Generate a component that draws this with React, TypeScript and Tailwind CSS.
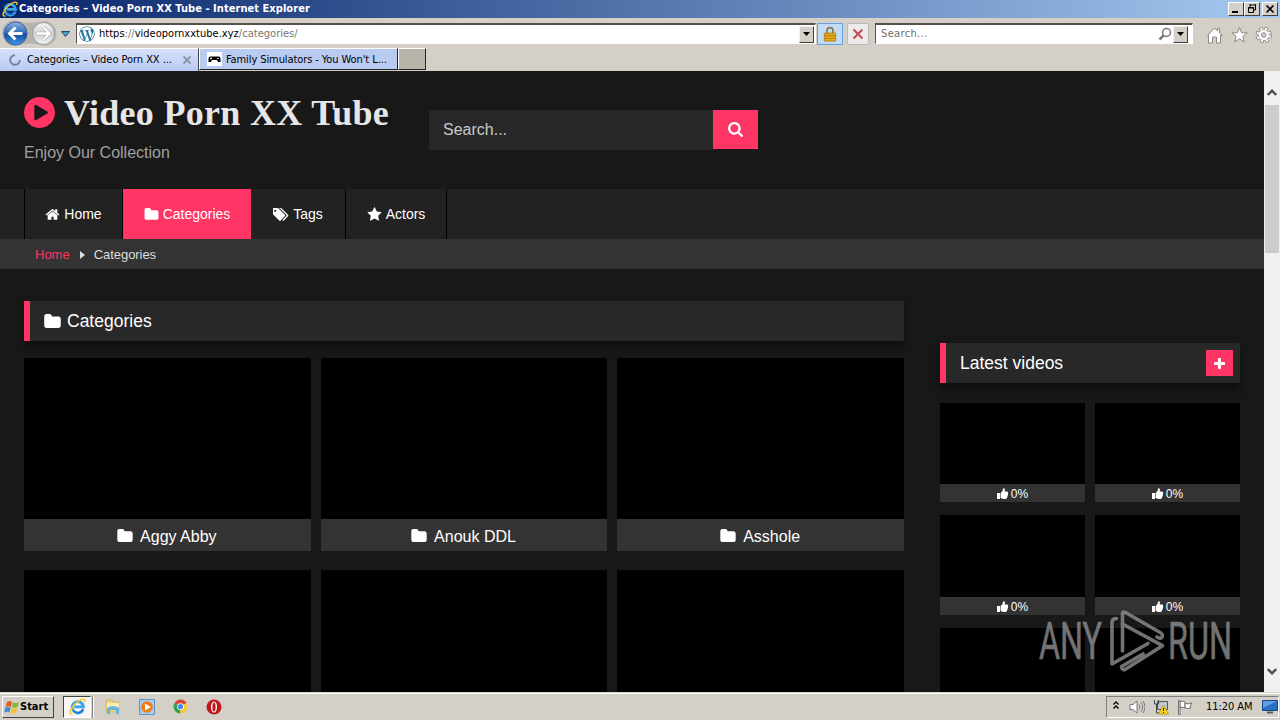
import React from "react";
import { FaWordpressSimple } from "react-icons/fa";

interface NavItem {
  name: string;
  icon: string;
  width: string;
  active?: boolean;
}

const icons = {
  home: "M1472 992v480q0 26-19 45t-45 19h-384v-384h-256v384h-384q-26 0-45-19t-19-45v-480q0-1 .5-3t.5-3l575-474 575 474q1 2 1 6zm223-69l-62 74q-8 9-21 11h-3q-13 0-21-7l-692-577-692 577q-12 8-24 7-13-2-21-11l-62-74q-8-10-7-23.5t11-21.5l719-599q32-26 76-26t76 26l244 204v-195q0-14 9-23t23-9h192q14 0 23 9t9 23v408l219 182q10 8 11 21.5t-7 23.5z",
  folder:
    "M1728 608v704q0 92-66 158t-158 66h-1216q-92 0-158-66t-66-158v-960q0-92 66-158t158-66h320q92 0 158 66t66 158v32h672q92 0 158 66t66 158z",
  tags: "M384 448q0-53-37.5-90.5t-90.5-37.5-90.5 37.5-37.5 90.5 37.5 90.5 90.5 37.5 90.5-37.5 37.5-90.5zm1067 576q0 53-37 90l-491 492q-39 37-91 37-53 0-90-37l-715-716q-38-37-64.5-101t-26.5-117v-416q0-52 38-90t90-38h416q53 0 117 26.5t102 64.5l715 714q37 39 37 91zm384 0q0 53-37 90l-491 492q-39 37-91 37-36 0-59-14t-53-45l470-470q37-37 37-90 0-52-37-91l-715-714q-38-38-102-64.5t-117-26.5h224q53 0 117 26.5t102 64.5l715 714q37 39 37 91z",
  star: "M1728 647q0 22-26 48l-363 354 86 500q1 7 1 20 0 21-10.5 35.5t-30.5 14.5q-19 0-40-12l-449-236-449 236q-22 12-40 12-21 0-31.5-14.5t-10.5-35.5q0-6 2-20l86-500-364-354q-25-27-25-48 0-37 56-46l502-73 225-455q19-41 49-41t49 41l225 455 502 73q56 9 56 46z",
  search:
    "M1216 832q0-185-131.5-316.5t-316.5-131.5-316.5 131.5-131.5 316.5 131.5 316.5 316.5 131.5 316.5-131.5 131.5-316.5zm512 832q0 52-38 90t-90 38q-54 0-90-38l-343-342q-179 124-399 124-143 0-273.5-55.5t-225-150-150-225-55.5-273.5 55.5-273.5 150-225 225-150 273.5-55.5 273.5 55.5 225 150 150 225 55.5 273.5q0 220-124 399l343 343q37 37 37 90z",
  plus: "M1600 736v192q0 40-28 68t-68 28h-416v416q0 40-28 68t-68 28h-192q-40 0-68-28t-28-68v-416h-416q-40 0-68-28t-28-68v-192q0-40 28-68t68-28h416v-416q0-40 28-68t68-28h192q40 0 68 28t28 68v416h416q40 0 68 28t28 68z",
  play: "M896 128q209 0 385.5 103t279.5 279.5 103 385.5-103 385.5-279.5 279.5-385.5 103-385.5-103-279.5-279.5-103-385.5 103-385.5 279.5-279.5 385.5-103zm384 823q32-18 32-55t-32-55l-544-320q-31-19-64-1-32 19-32 56v640q0 37 32 56 16 8 32 8 17 0 32-9z",
  thumb: "M0 5h3v6H0zM3.600 5L5.500 3 6 .8Q6.300 0 7.300.300 8.400 1 7.700 3.600h2.500q1.200.2.900 1.400.3.700-.1 1.300.2.800-.3 1.300.1.900-.5 1.400 0 2-1.800 2H6.500L3.600 10z",
};

const navItems: NavItem[] = [
  { name: "Home", icon: icons.home, width: "w-[99px]" },
  { name: "Categories", icon: icons.folder, width: "w-[128px] pl-px", active: true },
  { name: "Tags", icon: icons.tags, width: "w-[95px]" },
  { name: "Actors", icon: icons.star, width: "w-[101px]" },
];

const categories = ["Aggy Abby", "Anouk DDL", "Asshole", "", "", ""];
const latest = ["0%", "0%", "0%", "0%", "", ""];

const Icon = ({ d, className, box = "0 0 1792 1792" }: { d: string; className: string; box?: string }) => (
  <svg viewBox={box} className={className} fill="currentColor">
    <path d={d} />
  </svg>
);

const IeLogo = ({ className }: { className: string }) => (
  <svg viewBox="0 0 16 16" className={className} fill="none">
    <path d="M13.3 10.6A5.3 5.3 0 1 1 13.6 8.4H5" stroke="#3aa5e8" strokeWidth="2.7" />
    <path d="M13.2 10.4A5.3 5.3 0 0 1 4 11.7" stroke="#1d6fc4" strokeWidth="1" />
    <path
      d="M3.4 14.8C.8 15.6.3 13.6 2 10.6 4.2 6.6 8.6 2.6 12 1.4c2.6-.9 3.5.4 2.6 2.7"
      stroke="#f2c62c"
      strokeWidth="1.4"
    />
  </svg>
);

const DropButton = () => (
  <button className="flex h-[17px] w-[15px] items-center justify-center border border-t-[#f4f2ee] border-l-[#f4f2ee] border-r-[#404040] border-b-[#404040] bg-[#d4d0c8]">
    <svg viewBox="0 0 7 4" className="h-1 w-[7px]">
      <path d="M0 0h7L3.5 4z" />
    </svg>
  </button>
);

const WindowButton = ({ children }: { children: React.ReactNode }) => (
  <button className="flex h-[14px] w-4 items-center justify-center border border-t-white border-l-white border-r-[#404040] border-b-[#404040] bg-[#d4d0c8]">
    <svg viewBox="0 0 12 10" className="h-[10px] w-3" fill="none" stroke="#000">
      {children}
    </svg>
  </button>
);

const TitleBar = () => (
  <div className="flex h-[18px] items-center bg-linear-to-r from-[#0a246a] to-[#a6caf0] pr-[2px] pl-[2px]">
    <IeLogo className="h-4 w-4" />
    <span className="ml-px flex-1 pt-px text-[11px] font-bold tracking-[0.05px] whitespace-nowrap text-white">
      Categories – Video Porn XX Tube - Internet Explorer
    </span>
    <WindowButton>
      <path d="M2 8h6" strokeWidth="2" />
    </WindowButton>
    <WindowButton>
      <path d="M4 1h6M4 0v3M9.500 0v6H8" />
      <path d="M2.500 3.500h5v5h-5zM2 4h6" />
    </WindowButton>
    <span className="w-[2px]" />
    <WindowButton>
      <path d="M2.500 1.500l7 7M9.500 1.500l-7 7" strokeWidth="1.6" />
    </WindowButton>
  </div>
);

const AddressRow = () => (
  <div className="flex h-[29px] items-center bg-[#d4d0c8]">
    <svg viewBox="0 0 76 29" className="h-[29px] w-[76px] shrink-0">
      <defs>
        <linearGradient id="back" x1="0" y1="0" x2="0" y2="1">
          <stop offset="0" stopColor="#8fb3e2" />
          <stop offset=".48" stopColor="#2f68b8" />
          <stop offset=".52" stopColor="#12489c" />
          <stop offset="1" stopColor="#3f9be8" />
        </linearGradient>
        <linearGradient id="forward" x1="0" y1="0" x2="0" y2="1">
          <stop offset="0" stopColor="#f6f6f6" />
          <stop offset=".52" stopColor="#cfd0d2" />
          <stop offset="1" stopColor="#f5f5f5" />
        </linearGradient>
      </defs>
      <path d="M15 2q14 5 29 1a12.500 12.500 0 0 1 0 25q-14-5-29 0a12.500 12.500 0 0 1 0-26" fill="#b6b4b0" />
      <circle cx="15.500" cy="15.500" r="11.500" fill="url(#back)" stroke="#3c5f95" />
      <path d="M22.500 15.500H10M15.500 9.500l-6 6 6 6" fill="none" stroke="#fff" strokeWidth="3" />
      <circle cx="43.500" cy="15.500" r="11" fill="url(#forward)" stroke="#999" />
      <path d="M37 15.500h12M43.500 9.500l6 6-6 6" fill="none" stroke="#a5a5a5" strokeWidth="3.600" />
      <path d="M37 15.500h12M43.500 9.500l6 6-6 6" fill="none" stroke="#fff" strokeWidth="2.400" />
      <path d="M61.500 13.500h8l-4 5z" fill="#4ba0cc" stroke="#174a75" />
    </svg>
    <div className="mt-[2px] flex h-[21px] w-[740px] items-center border border-t-2 border-t-[#55504a] border-l-[#55504a] border-r-white border-b-white bg-white pr-[1px] pl-[2px]">
      <FaWordpressSimple className="mr-1 h-4 w-4 rounded-full text-[#21759b]" />
      <span className="flex-1 text-[11px] tracking-[0.02px] whitespace-nowrap text-[#777]">
        <span className="text-black">https</span>://<span className="text-black">videopornxxtube.xyz</span>
        /categories/
      </span>
      <DropButton />
    </div>
    <button className="mt-[2px] ml-[1px] flex h-[22px] w-[26px] items-center justify-center border border-[#62a3e6] bg-[#c2dcf7]">
      <svg viewBox="0 0 16 18" className="h-4 w-[14px]">
        <path d="M4.500 8V5.200a3.500 3.500 0 0 1 7 0V8" fill="none" stroke="#8a7a4a" strokeWidth="2" />
        <path d="M1.500 8h13v9h-13z" fill="#e8ad1c" stroke="#b07a0c" />
        <path d="M2 11h12M2 14h12" stroke="#ad7910" />
      </svg>
    </button>
    <button className="mt-[2px] ml-[4px] flex h-[22px] w-[22px] items-center justify-center rounded-xs border border-[#bdbbb9] bg-[#ecebea]">
      <svg viewBox="0 0 12 12" className="h-3 w-3">
        <path d="M1.500 1.500l9 9M10.500 1.500l-9 9" stroke="#c84a50" strokeWidth="2" />
      </svg>
    </button>
    <div className="mt-[2px] ml-[6px] flex h-[21px] w-[318px] items-center border border-t-2 border-t-[#55504a] border-l-[#55504a] border-r-white border-b-white bg-white pr-[4px] pl-[5px]">
      <span className="flex-1 pt-px text-[11px] tracking-[0.35px] text-[#6d6d6d]">Search...</span>
      <svg viewBox="0 0 14 14" className="mr-[1px] h-[14px] w-[14px]" fill="none" stroke="#777">
        <circle cx="8.500" cy="5.500" r="4" strokeWidth="1.500" />
        <path d="M5.500 8.500L1.500 12.500" strokeWidth="2.500" />
      </svg>
      <DropButton />
    </div>
    <svg viewBox="0 0 86 29" className="ml-px h-[29px] w-[86px] shrink-0" fill="#fff" stroke="#8b8883">
      <path d="M13.500 17.500L20.500 10l3 3v-2.500h2v4.500l3 2.500h-2v7.500h-4v-6h-4v6h-4v-7.500z" />
      <path d="M45.500 9.500l2 5.200 5.700.2-4.400 3.500 1.500 5.600-4.800-3.200-4.800 3.200 1.500-5.600-4.400-3.500 5.700-.2z" />
      <circle cx="69.800" cy="17" r="6.200" fill="none" strokeWidth="4" strokeDasharray="3 1.870" />
      <circle cx="69.800" cy="17" r="5.600" strokeWidth=".8" />
      <circle cx="69.800" cy="17" r="6.200" fill="none" stroke="#fff" strokeWidth="2.400" strokeDasharray="1.800 3.070" strokeDashoffset="-.6" />
      <circle cx="69.800" cy="17" r="2.300" fill="#d4d0c8" />
    </svg>
  </div>
);

const TabRow = () => (
  <div className="flex h-6 items-start bg-[#d4d0c8] pt-px">
    <div className="flex h-[23px] w-[199px] items-center border-t border-r border-t-white border-r-[#444] bg-linear-to-b from-[#d6e0fa] to-[#b9cbf1] pl-[9px]">
      <svg viewBox="0 0 12 12" className="h-3 w-3" fill="none" stroke="#72839b" strokeWidth="2">
        <path d="M6 1.200A4.800 4.800 0 1 0 10.800 6" />
      </svg>
      <span className="ml-[6px] flex-1 pt-px text-[11px] tracking-[-0.05px] whitespace-nowrap">
        Categories – Video Porn XX ...
      </span>
      <svg viewBox="0 0 8 8" className="mr-[7px] h-2 w-2" stroke="#8790a3" strokeWidth="1.800">
        <path d="M.5.500l7 7M7.500.500l-7 7" />
      </svg>
    </div>
    <div className="flex h-[22px] w-[199px] items-center border border-t-white border-l-white border-r-[#222] border-b-[#222] bg-[#b9cbf1] pl-[7px]">
      <svg viewBox="0 0 15 14" className="h-[14px] w-[15px]">
        <path d="M0 0h15v14H0z" fill="#fff" />
        <path d="M1.500 10V6.500q0-2 2-2h8q2 0 2 2V10h-2.500L10 8H5l-1 2z" />
        <path d="M4 5.500v2M3 6.500h2M10 6.500h2" stroke="#fff" strokeWidth=".8" />
      </svg>
      <span className="ml-1 flex-1 pt-[2px] text-[11px] tracking-[-0.09px] whitespace-nowrap">
        Family Simulators - You Won't L...
      </span>
    </div>
    <div className="h-[22px] w-[28px] border border-t-white border-l-white border-r-[#222] border-b-[#222] bg-[#b9b4aa]" />
  </div>
);

const Header = () => (
  <header className="flex h-[118px] pl-6">
    <div className="w-[405px] pt-[21px]">
      <h1 className="flex h-[41px] items-center font-['Liberation_Serif',serif] text-[36px] leading-[41px] font-bold tracking-[0.3px] whitespace-nowrap text-[#e6e6e6]">
        <Icon d={icons.play} box="128 128 1536 1536" className="mr-[9px] h-[31px] w-[31px] text-[#ff3565]" />
        <span className="pt-px">Video Porn XX Tube</span>
      </h1>
      <p className="mt-[10px] text-base leading-5 text-[#a0a0a0]">Enjoy Our Collection</p>
    </div>
    <div className="mt-[39px] flex h-10">
      <div className="w-[284px] bg-[#282828] pl-[14px] text-base leading-10 text-[#c8c8c8]">Search...</div>
      <button className="flex h-[39px] w-[45px] items-center justify-center bg-[#ff3565] text-white">
        <Icon d={icons.search} box="64 128 1664 1664" className="h-[15px] w-[15px]" />
      </button>
    </div>
  </header>
);

const Navigation = () => (
  <>
    <nav className="flex h-[50px] bg-[#222] pl-6">
      {navItems.map((item) => (
        <a
          key={item.name}
          className={`flex items-center justify-center border-r text-sm text-white ${item.width} ${
            item.active
              ? "border-[#ff3565] bg-[#ff3565]"
              : "border-black first:border-l first:border-l-black"
          }`}
        >
          <Icon
            d={item.icon}
            box={item.name === "Tags" ? "0 0 1920 1792" : "0 0 1792 1792"}
            className={`mr-1 h-[15px] ${item.name === "Tags" ? "w-4" : "w-[15px]"}`}
          />
          {item.name}
        </a>
      ))}
    </nav>
    <div className="flex h-[30px] items-center bg-[#333] pt-px pl-[35px] text-[13px] text-[#ddd]">
      <span className="text-[#ff3565]">Home</span>
      <svg viewBox="0 0 5 8" className="mr-[9px] ml-[10px] h-2 w-[5px]" fill="currentColor">
        <path d="M0 0l5 4-5 4z" />
      </svg>
      <span className="tracking-[-0.05px]">Categories</span>
    </div>
  </>
);

const Categories = () => (
  <section className="w-[880px]">
    <h2 className="flex h-10 items-center border-l-6 border-[#ff3565] bg-[#282828] pl-[14px] text-[17.5px] text-white shadow-[0_6px_8px_rgba(0,0,0,0.45)]">
      <Icon d={icons.folder} box="64 128 1664 1408" className="mr-[6px] h-[14px] w-[17px]" />
      Categories
    </h2>
    <div className="mt-[17px] grid grid-cols-3 gap-x-[10px] gap-y-[19px]">
      {categories.map((name, i) => (
        <div key={i}>
          <div className="h-[161px] bg-black" />
          <div className="flex h-8 items-center justify-center bg-[#333] pt-[3px] pr-px text-base text-white">
            <Icon d={icons.folder} box="64 128 1664 1408" className="mr-[7px] mb-[2px] h-[13px] w-[16px]" />
            {name}
          </div>
        </div>
      ))}
    </div>
  </section>
);

const Sidebar = () => (
  <aside className="mt-[42px] w-[300px]">
    <h2 className="flex h-10 items-center justify-between border-l-6 border-[#ff3565] bg-[#282828] pr-[7px] pl-[14px] text-[17.5px] text-white shadow-[0_6px_8px_rgba(0,0,0,0.45)]">
      Latest videos
      <span className="flex h-[26px] w-[27px] items-center justify-center bg-[#ff3565]">
        <Icon d={icons.plus} box="192 128 1408 1408" className="h-[11px] w-[11px]" />
      </span>
    </h2>
    <div className="mt-5 grid grid-cols-2 gap-x-[10px] gap-y-[13px]">
      {latest.map((rating, i) => (
        <div key={i}>
          <div className="h-[81.3px] bg-black" />
          <div className="flex h-[18px] items-center justify-center gap-[2px] bg-[#333] pt-[2px] text-xs text-white">
            <Icon d={icons.thumb} box="0 0 12 12" className="h-3 w-3" />
            {rating}
          </div>
        </div>
      ))}
    </div>
  </aside>
);

const ScrollBar = () => (
  <div className="flex w-4 flex-col items-center bg-[#f0f0f0] pt-[18px] pb-[17px]">
    <svg viewBox="0 0 10 7" className="h-[7px] w-[10px]" fill="none" stroke="#505050" strokeWidth="2.400">
      <path d="M.8 6L5 1.800 9.200 6" />
    </svg>
    <div className="mt-[9px] h-[148px] w-[14px] bg-[#cdcdcd]" />
    <svg viewBox="0 0 10 7" className="mt-auto h-[7px] w-[10px]" fill="none" stroke="#505050" strokeWidth="2.400">
      <path d="M.8 1L5 5.200 9.200 1" />
    </svg>
  </div>
);

const Watermark = () => (
  <svg
    viewBox="0 0 220 70"
    className="absolute top-[605px] left-[1035px] h-[70px] w-[220px] opacity-80"
    fill="#8f8f8f"
    stroke="#8f8f8f"
    fontFamily="Roboto, sans-serif"
    fontSize="51"
  >
    <text x="4" y="54" textLength="63" lengthAdjust="spacingAndGlyphs" strokeWidth=".6">ANY</text>
    <text x="133" y="54" textLength="64" lengthAdjust="spacingAndGlyphs" strokeWidth=".6">RUN</text>
    <g fill="none" strokeWidth="3.600" strokeLinejoin="round" strokeLinecap="round">
      <path d="M87.500 46V9q0-3 3-1.500L126 28q3 3 0 5-2 .5-4-1" />
      <path d="M81.500 13.500q-4.500 0-4.500 4V59L113 38.500" />
      <path d="M87.500 19L127.500 40.700 90 64.500q-3 1-3.500-3L108 49" />
    </g>
  </svg>
);

const TaskBar = () => (
  <div className="flex h-7 items-center border-t border-[#d4d0c8] bg-[#d4d0c8] shadow-[inset_0_1px_0_#fff]">
    <button className="ml-[2px] flex h-[22px] w-[52px] items-center border border-t-white border-l-white border-r-[#404040] border-b-[#404040] pl-[1px] text-[11px] font-bold">
      <svg viewBox="0 0 16 16" className="h-4 w-4">
        <path d="M3 3q3-2 5 0L6.800 8Q4.500 6.500 1.500 8z" fill="#e65a25" />
        <path d="M8.800 3.300q3 1.500 6-.3L13.500 8q-3 1.500-5.500 0z" fill="#7cbb3c" />
        <path d="M1.300 8.800q3-1.500 5.300 0L5.300 13.500q-2-1.500-5 0z" fill="#3c8bd8" />
        <path d="M7.700 9q3 1.500 5.500.2l-1.300 4.800q-3 1.500-5.500-.3z" fill="#f4c22c" />
      </svg>
      <span className="pt-px">Start</span>
    </button>
    <div className="ml-[9px] flex h-[22px] w-[28px] items-center justify-center border border-t-[#404040] border-l-[#404040] border-r-white border-b-white bg-[#f7f6f4]">
      <IeLogo className="h-[17px] w-[17px]" />
    </div>
    <div className="ml-[1px] h-[22px] w-[2px] border-r border-l border-r-white border-l-[#808080]" />
    <svg viewBox="0 0 16 16" className="ml-[11px] h-4 w-4">
      <path d="M1 1h6l1 2h6v10H1z" fill="#ecd480" stroke="#c9a84d" strokeWidth=".6" />
      <path d="M2 4h12v5H2z" fill="#f8eeb4" />
      <path d="M2 9q6-4 12 0v6h-3v-4H5v4H2z" fill="#69b4df" />
    </svg>
    <svg viewBox="0 0 16 16" className="ml-[18px] h-4 w-4">
      <path d="M.5.500h15v15H.5z" fill="#a9cbed" stroke="#5c93c9" />
      <circle cx="8" cy="8" r="5.800" fill="#ef7c16" />
      <path d="M6 4.500L12 8l-6 3.500z" fill="#fff" />
    </svg>
    <svg viewBox="0 0 16 16" className="ml-[18px] h-[15px] w-[15px]">
      <path d="M8 8L1.500 4.300A7.500 7.500 0 0 1 14.500 4.300z" fill="#dd4437" />
      <path d="M8 8L14.500 4.300A7.500 7.500 0 0 1 7.500 15.500z" fill="#fbcb35" />
      <path d="M8 8l-.5 7.500A7.500 7.500 0 0 1 1.500 4.300z" fill="#31a354" />
      <circle cx="8" cy="8" r="3.600" fill="#fff" />
      <circle cx="8" cy="8" r="2.800" fill="#4687ea" />
    </svg>
    <svg viewBox="0 0 16 16" className="ml-[18px] h-4 w-4">
      <circle cx="8" cy="8" r="7.500" fill="#bd1a20" />
      <ellipse cx="8" cy="8" rx="3" ry="5.500" fill="#fff" />
      <ellipse cx="8" cy="8" rx="1.600" ry="4.600" fill="#bd1a20" />
    </svg>
    <div className="mr-[1px] ml-auto flex h-[22px] w-[173px] items-center border border-t-[#808080] border-l-[#808080] border-r-white border-b-white pl-[6px]">
      <svg viewBox="0 0 6 9" className="mb-[3px] h-[9px] w-[6px]" fill="none" stroke="#000" strokeWidth="1.300">
        <path d="M.5 3.500L3 1l2.500 2.500M.5 7.500L3 5l2.500 2.500" />
      </svg>
      <svg viewBox="0 0 16 16" className="ml-[10px] h-4 w-4" fill="none" stroke="#777">
        <path d="M1 5.500h3L8 2v12L4 10.500H1z" fill="#fff" />
        <path d="M10 5.500q2 2.500 0 5M12 3.500q3.500 4.500 0 9M14 2q4 6 0 12" />
      </svg>
      <svg viewBox="0 0 16 16" className="ml-2 h-4 w-4">
        <path d="M4.500 2.500h10v8h-10z" fill="#bcc6cc" stroke="#555" />
        <path d="M1.500 1v4h4V1M3.500 5v9h5" fill="none" stroke="#444" />
        <path d="M10.500 6.500l5 8.500h-10z" fill="#fbd520" stroke="#b38b00" strokeWidth=".7" />
        <path d="M10.500 9v3M10.500 13v1" stroke="#222" />
      </svg>
      <svg viewBox="0 0 16 16" className="ml-2 h-4 w-4" fill="#fff" stroke="#6f6f6f">
        <path d="M3 2.500q3-1 5 .5v6q-2-1-5-.5z" />
        <path d="M8 4.500q3 1 7-.5l-2 3 1 2q-4 1.500-6-.5z" />
        <path d="M1.500 1.500h1.500v14H1.500z" />
      </svg>
      <span className="ml-[13px] pt-px text-[11px] tracking-[-0.05px] whitespace-nowrap">11:20 AM</span>
      <svg viewBox="0 0 16 14" className="ml-auto h-[14px] w-4">
        <path d="M.5.500h15v10H.5z" fill="#2b6fc5" stroke="#174484" />
        <path d="M1 1h14L1 8z" fill="#5ea0e6" />
        <path d="M5 12.500h6" stroke="#56616d" strokeWidth="2" />
      </svg>
    </div>
  </div>
);

const App = () => {
  return (
    <div className="relative flex h-[720px] w-[1280px] flex-col overflow-hidden bg-[#d4d0c8] font-['DejaVu_Sans_Condensed','DejaVu_Sans',sans-serif] text-black">
      <TitleBar />
      <AddressRow />
      <TabRow />
      <div className="flex h-[621px] overflow-hidden font-['Liberation_Sans',Arial,sans-serif]">
        <main className="w-[1264px] bg-[#181818]">
          <Header />
          <Navigation />
          <div className="flex gap-9 pt-8 pl-6">
            <Categories />
            <Sidebar />
          </div>
        </main>
        <ScrollBar />
      </div>
      <TaskBar />
      <Watermark />
    </div>
  );
};

export default App;
